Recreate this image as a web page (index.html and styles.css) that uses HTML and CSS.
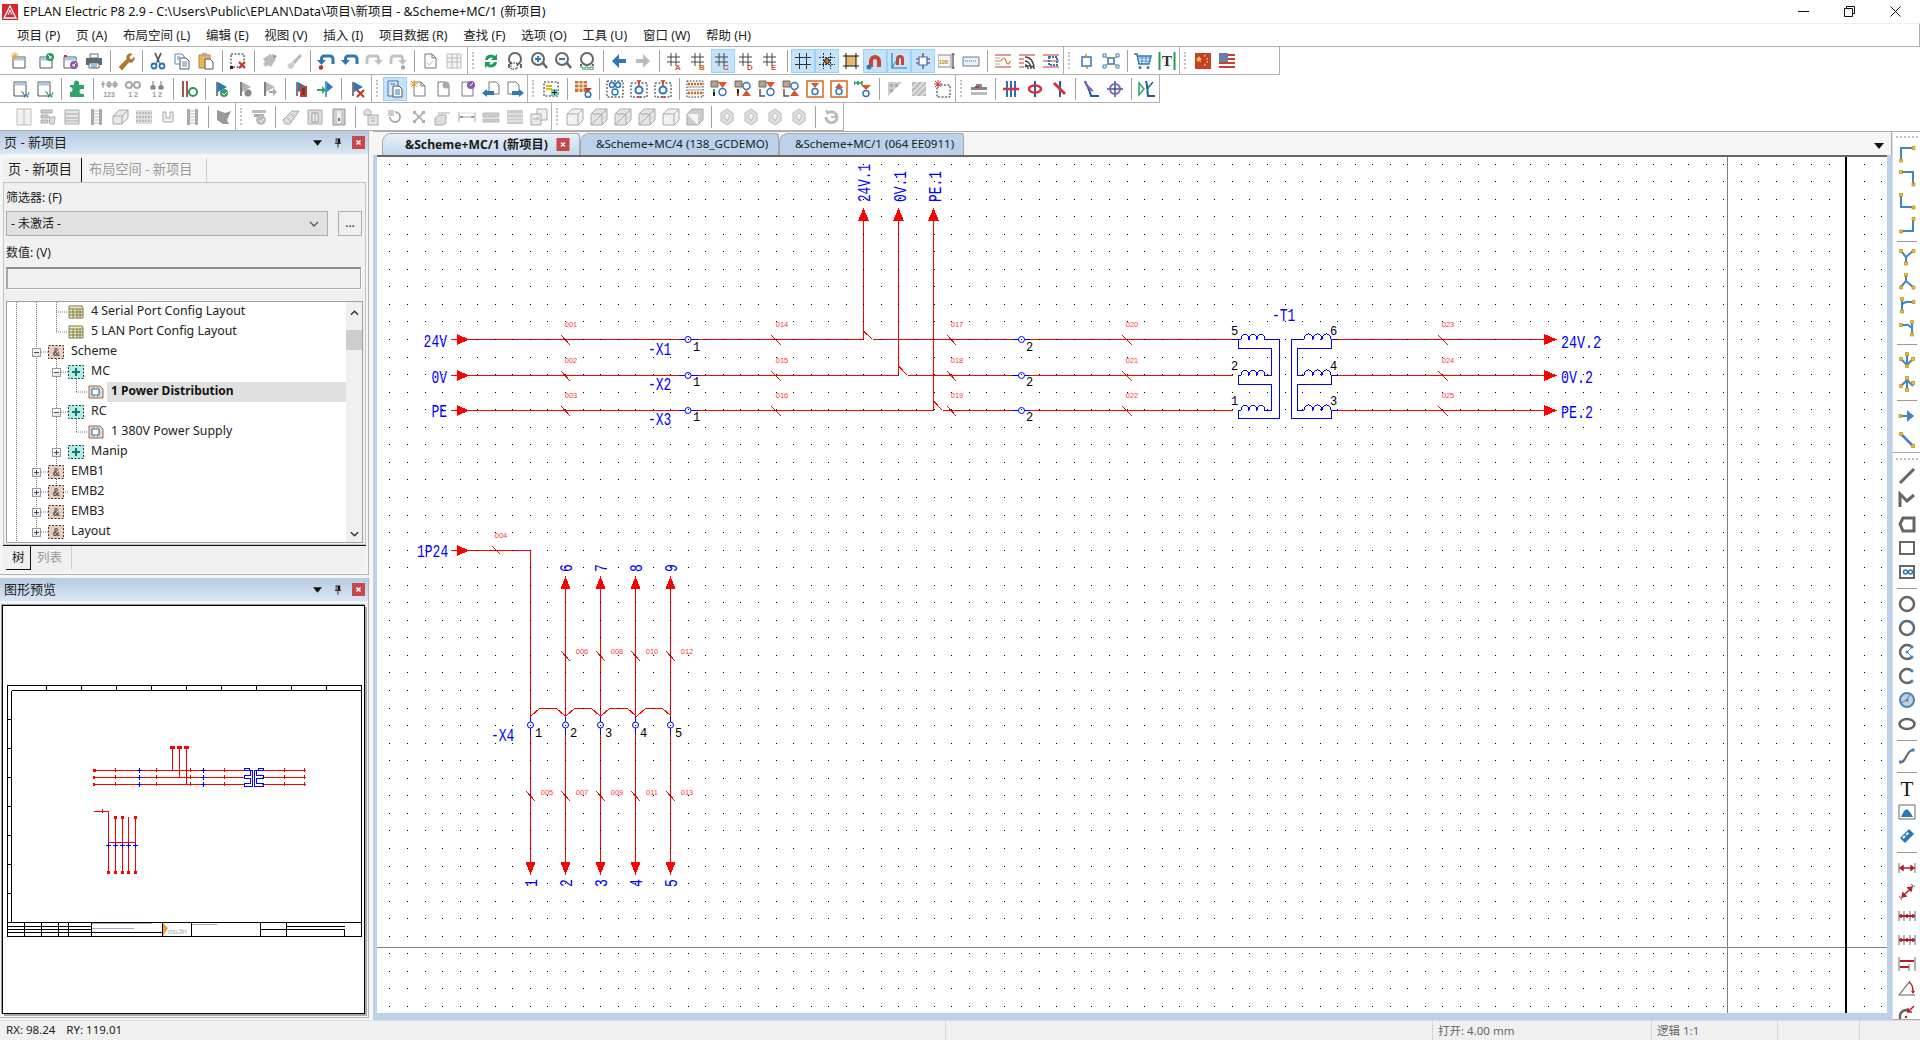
FILE: index.html
```html
<!DOCTYPE html>
<html lang="zh">
<head>
<meta charset="utf-8">
<title>EPLAN Electric P8 2.9</title>
<link rel="stylesheet" href="styles.css">
</head>
<body>
<svg class="sprite" xmlns="http://www.w3.org/2000/svg">
<defs>
<g id="pg"><path d="M3 5h12v11H3z" fill="#fff" stroke="#555"/><path d="M3.5 5.500h11v3h-11z" fill="#a9c6e4"/></g>
<g id="pl"><path d="M4 2h7l4 4v10H4z" fill="#fff" stroke="#777"/><path d="M11 2v4h4" fill="none" stroke="#777"/></g>
<g id="flg"><path d="M5 2v14" stroke="#555" stroke-width="1.500"/></g>
</defs>
<symbol id="dn" viewBox="0 0 18 18"><use href="#pg"/><path d="M5 0v8M1 4h8M2 1l6 6M8 1L2 7" stroke="#f0a030" fill="none"/></symbol>
<symbol id="dg" viewBox="0 0 18 18"><use href="#pg"/><circle cx="13" cy="5" r="4" fill="#2f9e62"/><path d="M11 3l3 3M14 4v2h-2" stroke="#fff" fill="none"/><path d="M2 1h3v3H2z" fill="none"/></symbol>
<symbol id="dp" viewBox="0 0 18 18"><use href="#pg"/><circle cx="13" cy="13" r="4" fill="#8a5bb0"/><path d="M15 11l-3 3M12 12v2h2" stroke="#fff" fill="none"/><path d="M3 3h3v2H3z" fill="#d8303a"/></symbol>
<symbol id="pr" viewBox="0 0 18 18"><path d="M5 2h8v4H5z" fill="#fff" stroke="#666"/><path d="M1 6h16v7H1z" fill="#5a6b78"/><path d="M4 11h10v5H4z" fill="#fff" stroke="#666"/><path d="M6 13h6M6 15h6" stroke="#3a7fc0"/></symbol>
<symbol id="wr" viewBox="0 0 18 18"><path d="M2 15l8-8c-1-3 1-6 5-5l-3 3 1 2 2 1 2-3c1 4-2 6-5 5l-7 8z" fill="#b9782c" stroke="#7f5015" stroke-width=".5"/></symbol>
<symbol id="sc" viewBox="0 0 18 18"><path d="M6 1l4 9M12 1l-4 9" stroke="#555" stroke-width="1.800"/><circle cx="5" cy="14" r="2.500" fill="none" stroke="#2f6fb0" stroke-width="1.800"/><circle cx="13" cy="14" r="2.500" fill="none" stroke="#2f6fb0" stroke-width="1.800"/><path d="M7 12l2-3 2 3" stroke="#2f6fb0" fill="none"/></symbol>
<symbol id="cp" viewBox="0 0 18 18"><path d="M2 2h7l2 2v8H2z" fill="#fff" stroke="#5a86b5"/><path d="M7 6h6l3 3v8H7z" fill="#fff" stroke="#555"/><path d="M9 10h5M9 12h5M9 14h5M4 5h3M4 7h2" stroke="#5a86b5"/></symbol>
<symbol id="pa" viewBox="0 0 18 18"><path d="M2 3h11v13H2z" fill="#e8b45e" stroke="#b5863a"/><path d="M5 1h5v3H5z" fill="#aaa"/><path d="M8 7h5l3 3v7H8z" fill="#fff" stroke="#555"/></symbol>
<symbol id="sx" viewBox="0 0 18 18"><path d="M2 2h13v13H2z" fill="none" stroke="#222" stroke-dasharray="2 1.500"/><path d="M1 14h3v3H1z" fill="#222"/><path d="M10 10l6 6M16 10l-6 6" stroke="#c9352b" stroke-width="2.200"/></symbol>
<symbol id="br" viewBox="0 0 18 18"><path d="M2 7l7-5 6 5-5 8-3-2-2 2-3-3 2-2z" fill="#bbb"/><path d="M11 2l5 2-3 3" fill="#999"/></symbol>
<symbol id="br2" viewBox="0 0 18 18"><path d="M15 2l2 2-7 8-3-2z" fill="#bbb"/><path d="M7 10l3 3-3 4-5-1 2-2-2-1z" fill="#ccc"/></symbol>
<symbol id="un" viewBox="0 0 18 18"><path d="M4.500 9V6.500A2.500 2.500 0 0 1 7 4h6a3 3 0 0 1 3 3v5" fill="none" stroke="#2f78b8" stroke-width="3"/><path d="M0 8h9l-4.500 5z" fill="#2f78b8"/><circle cx="4" cy="15.500" r="2.200" fill="#c02a2a"/></symbol>
<symbol id="un2" viewBox="0 0 18 18"><path d="M4.500 9V6.500A2.500 2.500 0 0 1 7 4h6a3 3 0 0 1 3 3v5" fill="none" stroke="#2f78b8" stroke-width="3"/><path d="M0 8h9l-4.500 5z" fill="#2f78b8"/></symbol>
<symbol id="re" viewBox="0 0 18 18"><path d="M13.500 9V6.500A2.500 2.500 0 0 0 11 4H5a3 3 0 0 0-3 3v5" fill="none" stroke="#c4c4c4" stroke-width="3"/><path d="M18 8H9l4.500 5z" fill="#c4c4c4"/></symbol>
<symbol id="re2" viewBox="0 0 18 18"><path d="M13.500 9V6.500A2.500 2.500 0 0 0 11 4H5a3 3 0 0 0-3 3v5" fill="none" stroke="#c4c4c4" stroke-width="3"/><path d="M18 8H9l4.500 5z" fill="#c4c4c4"/><circle cx="14" cy="15.500" r="2.200" fill="#aaa"/></symbol>
<symbol id="pc" viewBox="0 0 18 18"><use href="#pl"/><path d="M6 11l2 2 4-4" stroke="#bbb" fill="none"/></symbol>
<symbol id="tb" viewBox="0 0 18 18"><path d="M2 2h14v14H2zM2 6h14M2 10h14M7 2v14M12 2v14" fill="#f4f4f4" stroke="#bbb"/></symbol>
<symbol id="rf" viewBox="0 0 18 18"><path d="M3 8a6 6 0 0 1 10-4l2-2v6H9l2-2a3.500 3.500 0 0 0-5 2zM15 10a6 6 0 0 1-10 4l-2 2v-6h6l-2 2a3.500 3.500 0 0 0 5-2z" fill="#1f9a5a"/></symbol>
<symbol id="zw" viewBox="0 0 18 18"><circle cx="9" cy="7" r="6" fill="none" stroke="#666" stroke-width="2"/><path d="M3 12v4M15 12v4" stroke="#666" stroke-width="2"/><path d="M5 11h6v6H5z" fill="#fff" stroke="#222" stroke-dasharray="1.500 1"/></symbol>
<symbol id="zi" viewBox="0 0 18 18"><circle cx="8" cy="7" r="6" fill="#fff" stroke="#666" stroke-width="2"/><path d="M13 11l4 5" stroke="#666" stroke-width="2.500"/><path d="M5 7h6M8 4v6" stroke="#2f78b8" stroke-width="2"/></symbol>
<symbol id="zo" viewBox="0 0 18 18"><circle cx="8" cy="7" r="6" fill="#fff" stroke="#666" stroke-width="2"/><path d="M13 11l4 5" stroke="#666" stroke-width="2.500"/><path d="M5 7h6" stroke="#2f78b8" stroke-width="2"/></symbol>
<symbol id="z1" viewBox="0 0 18 18"><circle cx="9" cy="7" r="6" fill="none" stroke="#666" stroke-width="2"/><path d="M3 12v2M15 12v2" stroke="#666" stroke-width="2"/><path d="M2 15h3v3M7 15h3v3H7zM12 15h3v3h-3z" fill="none" stroke="#1f9a5a"/></symbol>
<symbol id="al" viewBox="0 0 18 18"><path d="M9 2L2 9l7 7v-5h7V7H9z" fill="#2f78b8"/></symbol>
<symbol id="ar" viewBox="0 0 18 18"><path d="M9 2l7 7-7 7v-5H2V7h7z" fill="#2f78b8"/></symbol>
<symbol id="arg" viewBox="0 0 18 18"><path d="M9 2l7 7-7 7v-5H2V7h7z" fill="#bbb"/></symbol>
<symbol id="gA" viewBox="0 0 18 18"><path d="M5 1v13M10 1v13M1 5h13M1 10h13" stroke="#444" fill="none"/><text class="gl c1" x="9" y="18">A</text></symbol>
<symbol id="gB" viewBox="0 0 18 18"><path d="M5 1v13M10 1v13M1 5h13M1 10h13" stroke="#444" fill="none"/><text class="gl c1" x="9" y="18">B</text></symbol>
<symbol id="gC" viewBox="0 0 18 18"><path d="M5 1v13M10 1v13M1 5h13M1 10h13" stroke="#444" fill="none"/><text class="gl c1" x="9" y="18">C</text></symbol>
<symbol id="gD" viewBox="0 0 18 18"><path d="M5 1v13M10 1v13M1 5h13M1 10h13" stroke="#444" fill="none"/><text class="gl c1" x="9" y="18">D</text></symbol>
<symbol id="gE" viewBox="0 0 18 18"><path d="M5 1v13M10 1v13M1 5h13M1 10h13" stroke="#444" fill="none"/><text class="gl c1" x="9" y="18">E</text></symbol>
<symbol id="gr" viewBox="0 0 18 18"><path d="M5.500 1v16M12.500 1v16M1 5.500h16M1 12.500h16" stroke="#333" fill="none"/></symbol>
<symbol id="gs" viewBox="0 0 18 18"><path d="M5.500 1v16M12.500 1v16M1 5.500h16M1 12.500h16" stroke="#333" stroke-dasharray="2 1" fill="none"/><circle cx="9" cy="9" r="2.500" fill="#d9661a" stroke="#222"/></symbol>
<symbol id="ob" viewBox="0 0 18 18"><path d="M4 4h10v10H4z" fill="#e7b96d"/><path d="M4 1v16M14 1v16M1 4h16M1 14h16" stroke="#111" fill="none"/></symbol>
<symbol id="mg" viewBox="0 0 18 18"><path d="M3 15V9a6 6 0 0 1 12 0v6h-4V9a2 2 0 0 0-4 0v6z" fill="#c5482c"/><circle cx="3" cy="15" r="2.500" fill="#2f78b8"/></symbol>
<symbol id="mx" viewBox="0 0 18 18"><path d="M2 1v15h15" fill="none" stroke="#2f78b8" stroke-width="1.200"/><path d="M6 13V7a4 4 0 0 1 8 0v6h-3V7a1 1 0 0 0-2 0v6z" fill="#c5482c"/><path d="M2 16L8 6" stroke="#2f78b8"/></symbol>
<symbol id="cn" viewBox="0 0 18 18"><path d="M5 5h8v8H5z" fill="#fff" stroke="#2f78b8" stroke-width="1.200"/><path d="M2 7h3M13 7h3M2 11h3M13 11h3M9 1v4M9 13v4" stroke="#8b2b2b" stroke-width="1.200"/></symbol>
<symbol id="n8" viewBox="0 0 18 18"><path d="M0 3h13v12H0z" fill="#f5f5f5" stroke="#888"/><text class="tn" x="1" y="12">128</text><path d="M15 2v14M13.500 2h3M13.500 16h3" stroke="#222" fill="none"/></symbol>
<symbol id="rl" viewBox="0 0 18 18"><path d="M1 5h16v9H1z" fill="#e8f0fa" stroke="#6a7a8a"/><path d="M3 9h12" stroke="#2f78b8" stroke-dasharray="1 1"/></symbol>
<symbol id="w1" viewBox="0 0 18 18"><path d="M1 3h16M1 15h16" stroke="#c9352b"/><path d="M1 9h5c2 0 2-3 4-3s2 6 4 6 1-3 3-3" fill="none" stroke="#c9842b" stroke-width="1.200"/><path d="M1 6h5M1 12h5" stroke="#aaa"/></symbol>
<symbol id="w2" viewBox="0 0 18 18"><path d="M1 3h16M1 7h5M1 11h5M1 15h5" stroke="#c9352b"/><path d="M7 15a8 8 0 0 1 8 0M7 5c5 0 9 4 9 12M7 9c3 0 6 3 6 8M7 13c2 0 3 2 3 4" fill="none" stroke="#444" stroke-width="1.400"/></symbol>
<symbol id="w3" viewBox="0 0 18 18"><path d="M1 3h16M1 15h16M1 9h16" stroke="#c9352b"/><path d="M7 5h8v8H7z" fill="none" stroke="#2f78b8" stroke-dasharray="2 1" stroke-width="2"/></symbol>
<symbol id="bx" viewBox="0 0 18 18"><path d="M4 5h9v9H4z" fill="#fff" stroke="#2f78b8" stroke-width="1.500"/><path d="M8 2v3M9 14v3" stroke="#c79013" stroke-width="1.500"/></symbol>
<symbol id="bn" viewBox="0 0 18 18"><path d="M6 6h6v6H6z" fill="none" stroke="#2f78b8" stroke-width="1.500"/><path d="M1 2h3v3H1zM14 2h3v3h-3zM1 13h3v3H1zM14 13h3v3h-3z" fill="#fff" stroke="#2f78b8"/><path d="M4 5l2 1M14 5l-2 1M4 13l2-1M14 13l-2-1" stroke="#c79013" stroke-width="1.200"/></symbol>
<symbol id="ct" viewBox="0 0 18 18"><path d="M0 2h3l2 10h10l2-8H4" fill="#dceaf7" stroke="#2f78b8" stroke-width="1.500"/><path d="M5 6h11M6 9h10M8 4v8M12 4v8" stroke="#2f78b8" stroke-width=".7"/><circle cx="6" cy="15.500" r="1.500" fill="#2f78b8"/><circle cx="14" cy="15.500" r="1.500" fill="#2f78b8"/></symbol>
<symbol id="tt" viewBox="0 0 18 18"><path d="M1.500 0v18" stroke="#1f9a5a" stroke-width="2"/><path d="M16.500 0v18" stroke="#1f9a5a" stroke-width="2"/><text class="tt" x="9" y="14">T</text></symbol>
<symbol id="fc" viewBox="0 0 18 18"><path d="M1 1h16v16H1z" fill="#c9402a"/><path d="M5 4l1 2 2 .5-1.500 1.500.5 2-2-1-2 1 .5-2L2 6.500 4 6z" fill="#f4d04a"/><path d="M10 3h1.500v1.500H10zM12.500 6H14v1.500h-1.500zM12.500 9H14v1.500h-1.500zM10 12h1.500v1.500H10z" fill="#f4d04a"/></symbol>
<symbol id="fu" viewBox="0 0 18 18"><path d="M1 1h16v16H1z" fill="#fff"/><path d="M1 2h16v2H1zM1 6h16v2H1zM1 10h16v2H1zM1 14h16v2H1z" fill="#c9402a"/><path d="M1 1h9v9H1z" fill="#6a7fa8"/></symbol>
<symbol id="c1" viewBox="0 0 18 18"><path d="M2 2h12v14H2z" fill="#fff" stroke="#555"/><path d="M2.500 2.500h11v3h-11z" fill="#a9c6e4"/><path d="M9 12h2l1 3h4l1-3" fill="none" stroke="#2f78b8"/><circle cx="12.500" cy="16.500" r="1" fill="#2f78b8"/><circle cx="15.500" cy="16.500" r="1" fill="#2f78b8"/></symbol>
<symbol id="c2" viewBox="0 0 18 18"><path d="M2 2h12v14H2z" fill="#fff" stroke="#555"/><path d="M2.500 2.500h11v3h-11z" fill="#a9c6e4"/><path d="M9 12h2l1 3h4l1-3" fill="none" stroke="#1f9a5a"/><circle cx="12.500" cy="16.500" r="1" fill="#1f9a5a"/><circle cx="15.500" cy="16.500" r="1" fill="#1f9a5a"/></symbol>
<symbol id="pz" viewBox="0 0 18 18"><path d="M6 3a2.500 2.500 0 0 1 5 0v2h5v4h-2a2.500 2.500 0 0 0 0 5h2v3H2v-5a2.500 2.500 0 0 0 0-5V5h4z" fill="#2fa36a"/></symbol>
<symbol id="t3" viewBox="0 0 18 18"><path d="M3 1v7M9 1v7M15 1v7M1 4h4M7 3h4v3H7zM13 3h4v3h-4z" stroke="#888" fill="none"/><text class="gn" x="9" y="17">123</text></symbol>
<symbol id="t2r" viewBox="0 0 18 18"><circle cx="5" cy="5" r="3" fill="none" stroke="#aaa" stroke-width="2"/><circle cx="13" cy="5" r="3" fill="none" stroke="#aaa" stroke-width="2"/><text class="gn" x="9" y="17">1 2</text></symbol>
<symbol id="t2" viewBox="0 0 18 18"><path d="M5 1v8M13 1v8M3 6h4v3H3zM11 6h4v3h-4z" stroke="#777" fill="#999"/><text class="gn" x="9" y="17">1 2</text></symbol>
<symbol id="bg" viewBox="0 0 18 18"><path d="M2 1h2v16H2zM6 1h2v16H6z" fill="#a9524a"/><circle cx="13" cy="12" r="4" fill="none" stroke="#1f9a5a" stroke-width="2"/></symbol>
<symbol id="f1" viewBox="0 0 18 18"><use href="#flg"/><path d="M6 2l9 5-9 5z" fill="#2f78b8"/><circle cx="12" cy="13" r="4" fill="#2f9e62"/><path d="M10 13l2 2 3-3" stroke="#fff" fill="none"/></symbol>
<symbol id="f2" viewBox="0 0 18 18"><use href="#flg"/><path d="M6 2l9 5-9 5z" fill="#b0b0b0"/><circle cx="12" cy="13" r="3.500" fill="#888" stroke="#bbb" stroke-dasharray="1 1"/></symbol>
<symbol id="f3" viewBox="0 0 18 18"><use href="#flg"/><path d="M6 2l9 5-9 5z" fill="#bbb"/><path d="M9 11h4V8l4 4-4 4v-3H9z" fill="#aaa"/></symbol>
<symbol id="f4" viewBox="0 0 18 18"><use href="#flg"/><path d="M6 2l9 5-9 5z" fill="#2f78b8"/><path d="M8 6h7v11H8z" fill="#b8452f"/><path d="M10 8h3v7h-3z" fill="#8a2f20"/></symbol>
<symbol id="f5" viewBox="0 0 18 18"><path d="M10 1v16" stroke="#2f78b8" stroke-width="1.500"/><path d="M11 2l6 5-6 5z" fill="#2f78b8"/><path d="M1 9h5V6l4 4-4 4v-3H1z" fill="#2fa36a"/></symbol>
<symbol id="f6" viewBox="0 0 18 18"><use href="#flg"/><path d="M6 2l9 5-9 5z" fill="#2f78b8"/><path d="M9 10l7 7M16 10l-7 7" stroke="#c9352b" stroke-width="2.200"/></symbol>
<symbol id="d1" viewBox="0 0 18 18"><path d="M2 1h10v15H2z" fill="#dceaf7" stroke="#2f78b8"/><path d="M7 6h6l3 3v8H7z" fill="#fff" stroke="#555"/><path d="M9 10h5M9 12h5M9 14h5M4 4h5" stroke="#2f78b8"/></symbol>
<symbol id="d2" viewBox="0 0 18 18"><use href="#pl"/><path d="M4 0v8M0 4h8M1 1l6 6M7 1L1 7" stroke="#f0a030"/></symbol>
<symbol id="d3" viewBox="0 0 18 18"><use href="#pl"/><circle cx="12" cy="5" r="3.500" fill="#aaa"/></symbol>
<symbol id="d4" viewBox="0 0 18 18"><use href="#pl"/><circle cx="13" cy="5" r="4" fill="#8a5bb0"/><path d="M15 3l-3 3" stroke="#fff"/></symbol>
<symbol id="d5" viewBox="0 0 18 18"><path d="M7 2h7l3 3v9H7z" fill="#fff" stroke="#777"/><path d="M0 13l5-4v2h7v4H5v2z" fill="#2f78b8"/></symbol>
<symbol id="d6" viewBox="0 0 18 18"><path d="M2 2h8l3 3v9H2z" fill="#fff" stroke="#777"/><path d="M18 13l-5-4v2H6v4h7v2z" fill="#2f78b8"/></symbol>
<symbol id="sy" viewBox="0 0 18 18"><path d="M2 2h14v14H2z" fill="none" stroke="#222" stroke-dasharray="2 1.500"/><path d="M4 5h6v2H4zM4 8h6v2H4z" fill="#e8b400"/><path d="M9 9h7v7H9z" fill="#6fd0c0"/><path d="M12.500 10v5M10 12.500h5" stroke="#222"/></symbol>
<symbol id="og" viewBox="0 0 18 18"><path d="M1 1h12v11H1z" fill="#c9752f"/><path d="M1 4h12M1 8h12M5 1v11M9 1v11" stroke="#fff"/><path d="M10 8h8l-4 4z" fill="#c9352b"/><circle cx="14" cy="14.500" r="2.800" fill="#fff" stroke="#2f78b8" stroke-width="1.500"/></symbol>
<symbol id="nb" viewBox="0 0 18 18"><path d="M1 1h16v16H1z" fill="none" stroke="#222" stroke-dasharray="2 1.500"/><circle cx="6" cy="5" r="2.500" fill="none" stroke="#2f78b8" stroke-width="1.500"/><circle cx="12" cy="5" r="2.500" fill="none" stroke="#2f78b8" stroke-width="1.500"/><circle cx="9" cy="12" r="3" fill="none" stroke="#2f78b8" stroke-width="1.500"/></symbol>
<symbol id="nr" viewBox="0 0 18 18"><path d="M1 3h16v14H1z" fill="none" stroke="#222" stroke-dasharray="2 1.500"/><path d="M7 1h4M9 1v5M7 17h4" stroke="#c9352b" stroke-width="1.500"/><circle cx="9" cy="10" r="3.500" fill="none" stroke="#2f78b8" stroke-width="2"/></symbol>
<symbol id="ts" viewBox="0 0 18 18"><path d="M1 1h16v16H1z" fill="none" stroke="#222" stroke-dasharray="1.500 1.500"/><path d="M2 4h14M2 13h14" stroke="#d9661a" stroke-width="2.500" stroke-dasharray="2 1"/><path d="M2 7h14M2 10h14" stroke="#999"/></symbol>
<symbol id="tr1" viewBox="0 0 18 18"><path d="M1 1h7v6H1z" fill="#b8a48e" stroke="#666"/><path d="M3 9h2v7H3z" fill="#222"/><path d="M3 9h2v3H3z" fill="#2fa36a"/><path d="M8 2h9l-4.500 6z" fill="#d9552e"/><circle cx="12.500" cy="12" r="3.500" fill="#fff" stroke="#2f78b8" stroke-width="1.500"/></symbol>
<symbol id="tr2" viewBox="0 0 18 18"><path d="M1 1h7v6H1z" fill="#b8a48e" stroke="#666"/><path d="M3 9h2v7H3z" fill="#222"/><path d="M3 13h2v3H3z" fill="#c9352b"/><circle cx="12.500" cy="6" r="3.500" fill="#fff" stroke="#2f78b8" stroke-width="1.500"/><path d="M8 16h9l-4.500-6z" fill="#d9552e"/></symbol>
<symbol id="tr3" viewBox="0 0 18 18"><path d="M1 1h7v6H1z" fill="#b8a48e" stroke="#666"/><path d="M2 9v7h5" fill="none" stroke="#555" stroke-width="1.500"/><path d="M8 2h9l-4.500 6z" fill="#d9552e"/><circle cx="12.500" cy="12" r="3.500" fill="#fff" stroke="#2f78b8" stroke-width="1.500"/></symbol>
<symbol id="tr4" viewBox="0 0 18 18"><path d="M1 1h7v6H1z" fill="#b8a48e" stroke="#666"/><path d="M2 9v7h5" fill="none" stroke="#555" stroke-width="1.500"/><circle cx="12.500" cy="6" r="3.500" fill="#fff" stroke="#2f78b8" stroke-width="1.500"/><path d="M8 16h9l-4.500-6z" fill="#d9552e"/></symbol>
<symbol id="ob1" viewBox="0 0 18 18"><path d="M1 1h16v16H1z" fill="#fff" stroke="#d9661a" stroke-width="1.500"/><path d="M5 3h8l-4 5z" fill="#d9552e"/><circle cx="9" cy="11.500" r="3" fill="#fff" stroke="#2f78b8" stroke-width="1.500"/></symbol>
<symbol id="ob2" viewBox="0 0 18 18"><path d="M1 1h16v16H1z" fill="#fff" stroke="#d9661a" stroke-width="1.500"/><path d="M5 8h8L9 3z" fill="#d9552e"/><circle cx="9" cy="11.500" r="3" fill="#fff" stroke="#2f78b8" stroke-width="1.500"/></symbol>
<symbol id="gt" viewBox="0 0 18 18"><path d="M0 3h8M0 1v4M4 1v4M8 1v4" stroke="#1f9a5a" stroke-width="1.500"/><path d="M7 5h10l-5 5z" fill="#d9552e"/><circle cx="12" cy="13.500" r="3" fill="#fff" stroke="#2f78b8" stroke-width="1.500"/></symbol>
<symbol id="hs" viewBox="0 0 18 18"><path d="M2 2h14l-14 14z" fill="#ccc"/><path d="M4 4h3v3H4zM9 4h3v3H9zM4 9h3v3H4z" fill="#aaa"/></symbol>
<symbol id="hh" viewBox="0 0 18 18"><path d="M2 2h14v14H2z" fill="#bbb"/><path d="M2 8l6-6M2 14L14 2M5 16L16 5M11 16l5-5" stroke="#ddd" stroke-width="2"/></symbol>
<symbol id="rs" viewBox="0 0 18 18"><path d="M3 5h13v12H3z" fill="none" stroke="#222" stroke-dasharray="2 1.500"/><path d="M4 0v8M0 4h8M1 1l6 6M7 1L1 7" stroke="#d9303a"/></symbol>
<symbol id="sm" viewBox="0 0 18 18"><path d="M6 4h6v3h5v3H1V7h5z" fill="#888"/><path d="M5 6h4v2H5z" fill="#c9352b"/><path d="M1 12h16v3H1z" fill="#bbb"/></symbol>
<symbol id="l1" viewBox="0 0 18 18"><path d="M5 1v16M9 1v16M13 1v16" stroke="#1f5fa0" stroke-width="1.800"/><path d="M1 9h16" stroke="#d9303a" stroke-width="2.500"/></symbol>
<symbol id="l2" viewBox="0 0 18 18"><path d="M9 1v16" stroke="#1f5fa0" stroke-width="2"/><ellipse cx="9" cy="9" rx="6" ry="3.500" fill="none" stroke="#d9303a" stroke-width="2.500"/></symbol>
<symbol id="l3" viewBox="0 0 18 18"><path d="M10 1v16" stroke="#1f5fa0" stroke-width="2"/><path d="M4 3l11 11" stroke="#d9303a" stroke-width="3"/></symbol>
<symbol id="l4" viewBox="0 0 18 18"><path d="M3 1c2 6 5 9 6 15h8" fill="none" stroke="#1f5fa0" stroke-width="2"/><path d="M3 1c1 5 4 7 8 10" fill="none" stroke="#8a5bb0" stroke-width="2"/></symbol>
<symbol id="l5" viewBox="0 0 18 18"><path d="M9 1v16M1 9h16" stroke="#1f5fa0" stroke-width="1.500"/><circle cx="9" cy="9" r="5" fill="none" stroke="#8a5bb0" stroke-width="2"/></symbol>
<symbol id="l6" viewBox="0 0 18 18"><path d="M1 3l5 6-5 6z" fill="none" stroke="#2fa36a" stroke-width="1.500"/><path d="M8 1c2 6 1 9 2 15h7" fill="none" stroke="#1f5fa0" stroke-width="2"/><path d="M9 9l6-7" stroke="#1f5fa0" stroke-width="1.500"/></symbol>
<symbol id="g1" viewBox="0 0 18 18"><path d="M2 1h14v16H2zM9 1v16M7 9h0M11 9h0" fill="#f0f0f0" stroke="#bbb"/></symbol>
<symbol id="g2" viewBox="0 0 18 18"><path d="M2 2h11v3H2zM2 7h7v3H2zM2 12h7v3H2z" fill="#ccc" stroke="#aaa"/><path d="M10 9h6l-1 7h-4z" fill="#ddd" stroke="#aaa"/></symbol>
<symbol id="g3" viewBox="0 0 18 18"><path d="M2 2h14v14H2zM2 6h14M2 10h14M2 13h14" fill="#e4e4e4" stroke="#aaa"/></symbol>
<symbol id="g4" viewBox="0 0 18 18"><path d="M4 1h3v16H4zM12 1h3v16h-3z" fill="#aaa"/><path d="M7 3h5M7 6h5M7 9h5M7 12h5M7 15h5" stroke="#bbb"/></symbol>
<symbol id="g5" viewBox="0 0 18 18"><path d="M2 8l6-6h9v8l-6 6H2z" fill="#e8e8e8" stroke="#aaa"/><path d="M2 8h9v8M11 8l6-6" fill="none" stroke="#aaa"/></symbol>
<symbol id="g6" viewBox="0 0 18 18"><path d="M1 2h16v14H1z" fill="#ddd"/><path d="M1 5h16M1 9h16M1 13h16" stroke="#999" stroke-dasharray="2 1"/></symbol>
<symbol id="g7" viewBox="0 0 18 18"><path d="M4 4v10h10V4h-3v6H7V4z" fill="#f0f0f0" stroke="#aaa"/></symbol>
<symbol id="g8" viewBox="0 0 18 18"><path d="M2 2l8 3 6-2-4 9 2 4H8L2 12z" fill="#999"/></symbol>
<symbol id="g9" viewBox="0 0 18 18"><path d="M2 2h14v3H2z" fill="#bbb"/><path d="M4 6h10v3H4z" fill="#aaa"/><circle cx="11" cy="12" r="5" fill="#bbb"/><path d="M9 12l2 2 3-3" stroke="#fff" fill="none"/></symbol>
<symbol id="g10" viewBox="0 0 18 18"><path d="M1 12L10 3h7L8 16H3z" fill="#ddd" stroke="#aaa"/><path d="M5 10l4 4M9 6l4 4" stroke="#aaa"/></symbol>
<symbol id="g11" viewBox="0 0 18 18"><path d="M2 2h14v14H2z" fill="#ddd" stroke="#aaa"/><path d="M6 5h6v9H6zM9 5v9" fill="#f4f4f4" stroke="#999"/></symbol>
<symbol id="g12" viewBox="0 0 18 18"><path d="M3 1h12v16H3z" fill="#ccc" stroke="#999"/><path d="M7 3h4v12H7z" fill="#eee"/><path d="M8 10h2v3H8z" fill="#777"/></symbol>
<symbol id="g13" viewBox="0 0 18 18"><path d="M2 3l4-2 3 2v4H2zM6 7h10v10H6z" fill="#e4e4e4" stroke="#aaa"/><path d="M9 10h4M9 13h4" stroke="#aaa"/></symbol>
<symbol id="g14" viewBox="0 0 18 18"><path d="M4 9a5 5 0 1 0 5-5" fill="none" stroke="#aaa" stroke-width="2"/><path d="M2 2h6v6H2z" fill="#ccc"/></symbol>
<symbol id="g15" viewBox="0 0 18 18"><path d="M3 3h3v3H3zM12 3h3v3h-3zM3 12h3v3H3zM12 12h3v3h-3zM7 7h4v4H7z" fill="#aaa"/><path d="M5 5l8 8M13 5l-8 8" stroke="#bbb" stroke-width="2"/></symbol>
<symbol id="g16" viewBox="0 0 18 18"><path d="M1 10l4-3h7v8l-3 2H1z" fill="#ddd" stroke="#aaa"/><path d="M4 5h12" stroke="#aaa"/></symbol>
<symbol id="g17" viewBox="0 0 18 18"><path d="M1 4v10M17 4v10M1 9h16" stroke="#aaa"/><path d="M5 9l-3 0M13 9h3" stroke="#999" stroke-width="2"/><path d="M3 5h12" stroke="#ddd"/></symbol>
<symbol id="g18" viewBox="0 0 18 18"><path d="M1 5h16v4H1zM1 11h16v3H1z" fill="#ccc" stroke="#bbb"/></symbol>
<symbol id="g19" viewBox="0 0 18 18"><path d="M1 2h16v14H1z" fill="#ccc"/><path d="M1 6h16M1 10h16M1 13h16" stroke="#eee"/></symbol>
<symbol id="g20" viewBox="0 0 18 18"><path d="M7 1h10v11H7z" fill="#f0f0f0" stroke="#aaa"/><path d="M1 6h10v11H1z" fill="#e8e8e8" stroke="#aaa"/><path d="M3 11h6M9 11l-2-2" stroke="#aaa" fill="none"/></symbol>
<symbol id="g21" viewBox="0 0 18 18"><path d="M1 6l5-5h11v11l-5 5H1zM1 6h11v11M12 6l5-5" fill="#f2f2f2" stroke="#aaa"/></symbol>
<symbol id="g22" viewBox="0 0 18 18"><path d="M1 6l5-5h11v11l-5 5H1zM1 17l11-11M1 6h11v11M12 6l5-5" fill="#e4e4e4" stroke="#aaa"/></symbol>
<symbol id="g23" viewBox="0 0 18 18"><path d="M1 6l5-5h11v11l-5 5H1z" fill="#ccc" stroke="#aaa"/><path d="M1 6h11v11z" fill="#f4f4f4"/></symbol>
<symbol id="g24" viewBox="0 0 18 18"><path d="M9 1l6 4v8l-6 4-6-4V5z" fill="#ddd" stroke="#bbb"/><path d="M9 5l3 3-3 5-3-5z" fill="#f4f4f4" stroke="#bbb"/></symbol>
<symbol id="g25" viewBox="0 0 18 18"><path d="M4 9a5.500 5.500 0 1 0 2-4" fill="none" stroke="#bbb" stroke-width="3"/><path d="M3 2l5 1-3 4z" fill="#bbb"/><path d="M9 8h5v2H9z" fill="#bbb"/></symbol>
<symbol id="k1" viewBox="0 0 18 18"><path d="M3 15V3h12" fill="none" stroke="#3f86c8" stroke-width="2"/><path class="nd" d="M1.500 14h3v3h-3zM14 1.500h3v3h-3z"/></symbol>
<symbol id="k2" viewBox="0 0 18 18"><path d="M3 3h12v12" fill="none" stroke="#3f86c8" stroke-width="2"/><path class="nd" d="M1.500 1.500h3v3h-3zM14 14h3v3h-3z"/></symbol>
<symbol id="k3" viewBox="0 0 18 18"><path d="M3 3v12h12" fill="none" stroke="#3f86c8" stroke-width="2"/><path class="nd" d="M1.500 1.500h3v3h-3zM14 14h3v3h-3z"/></symbol>
<symbol id="k4" viewBox="0 0 18 18"><path d="M3 15h12V3" fill="none" stroke="#3f86c8" stroke-width="2"/><path class="nd" d="M1.500 14h3v3h-3zM14 1.500h3v3h-3z"/></symbol>
<symbol id="y1" viewBox="0 0 18 18"><path d="M3 3l5 6v7M15 3L8 9" fill="none" stroke="#3f86c8" stroke-width="2"/><path class="nd" d="M1.500 1.500h3v3h-3zM14 1.500h3v3h-3zM6.500 14h3v3h-3z"/></symbol>
<symbol id="y2" viewBox="0 0 18 18"><path d="M3 15l5-6V3M15 15L8 9" fill="none" stroke="#3f86c8" stroke-width="2"/><path class="nd" d="M1.500 14h3v3h-3zM14 14h3v3h-3zM6.500 1.500h3v3h-3z"/></symbol>
<symbol id="y3" viewBox="0 0 18 18"><path d="M4 3v12M4 8l4-2h7" fill="none" stroke="#3f86c8" stroke-width="2"/><path class="nd" d="M2.500 1.500h3v3h-3zM2.500 14h3v3h-3zM14 4.500h3v3h-3z"/></symbol>
<symbol id="y4" viewBox="0 0 18 18"><path d="M14 3v12M14 9l-4-3H3" fill="none" stroke="#3f86c8" stroke-width="2"/><path class="nd" d="M12.500 1.500h3v3h-3zM12.500 14h3v3h-3zM1.500 4.500h3v3h-3z"/></symbol>
<symbol id="v1" viewBox="0 0 18 18"><path d="M3 8l6 6 6-6M9 3v11" fill="none" stroke="#3f86c8" stroke-width="2"/><path class="nd" d="M1.500 6.500h3v3h-3zM13.500 6.500h3v3h-3zM7.500 1.500h3v3h-3zM7.500 13.500h3v3h-3z"/></symbol>
<symbol id="v2" viewBox="0 0 18 18"><path d="M3 11l6-6 6 6M9 5v9" fill="none" stroke="#3f86c8" stroke-width="2"/><path class="nd" d="M1.500 9.500h3v3h-3zM13.500 6.500h3v3h-3zM7.500 1.500h3v3h-3zM7.500 13.500h3v3h-3z"/></symbol>
<symbol id="a1" viewBox="0 0 18 18"><path d="M2 9h12" stroke="#3f86c8" stroke-width="2"/><path d="M9 3l7 6-7 6z" fill="#3f86c8"/><path class="nd" d="M1 7.500h3v3H1z"/></symbol>
<symbol id="a2" viewBox="0 0 18 18"><path d="M3 3l12 12" stroke="#3f86c8" stroke-width="2.500"/><path class="nd" d="M1.500 1.500h3v3h-3zM13.500 13.500h3v3h-3z"/></symbol>
<symbol id="ln" viewBox="0 0 18 18"><path d="M2 16L16 2" stroke="#666" stroke-width="3"/></symbol>
<symbol id="pll" viewBox="0 0 18 18"><path d="M2 16V3l7 7 7-6" fill="none" stroke="#666" stroke-width="3"/></symbol>
<symbol id="plg" viewBox="0 0 18 18"><path d="M5 3h11v13H5L2 9z" fill="none" stroke="#666" stroke-width="3"/></symbol>
<symbol id="re3" viewBox="0 0 18 18"><path d="M2 3h14v12H2z" fill="none" stroke="#666" stroke-width="2"/></symbol>
<symbol id="rc2" viewBox="0 0 18 18"><path d="M2 3h14v12H2z" fill="none" stroke="#666" stroke-width="2"/><circle cx="7.500" cy="9" r="2" fill="none" stroke="#2f78b8" stroke-width="1.500"/><circle cx="12.500" cy="9" r="2" fill="none" stroke="#2f78b8" stroke-width="1.500"/></symbol>
<symbol id="ci" viewBox="0 0 18 18"><circle cx="9" cy="9" r="7" fill="none" stroke="#666" stroke-width="2.500"/></symbol>
<symbol id="ci2" viewBox="0 0 18 18"><circle cx="9" cy="9" r="7" fill="none" stroke="#666" stroke-width="2.500"/><circle cx="4" cy="4" r="1.500" fill="#3f86c8"/><circle cx="14" cy="4" r="1.500" fill="#3f86c8"/><circle cx="14" cy="14" r="1.500" fill="#3f86c8"/></symbol>
<symbol id="ci3" viewBox="0 0 18 18"><path d="M14 4a7 7 0 1 0 0 10" fill="none" stroke="#666" stroke-width="2.500"/><path d="M14 4l-5 5 5 5" fill="none" stroke="#3f86c8"/><circle cx="9" cy="9" r="1.500" fill="#3f86c8"/><circle cx="14" cy="4" r="1.500" fill="#3f86c8"/><circle cx="14" cy="14" r="1.500" fill="#3f86c8"/></symbol>
<symbol id="ci4" viewBox="0 0 18 18"><path d="M14 4a7 7 0 1 0 0 10" fill="none" stroke="#666" stroke-width="2.500"/><circle cx="14" cy="4" r="1.500" fill="#3f86c8"/><circle cx="14" cy="14" r="1.500" fill="#3f86c8"/></symbol>
<symbol id="ci5" viewBox="0 0 18 18"><circle cx="9" cy="9" r="7" fill="#ccc" stroke="#3f86c8" stroke-width="2"/><path d="M9 9L3 12M9 9l3-6" stroke="#3f86c8"/><circle cx="9" cy="9" r="1.500" fill="#3f86c8"/></symbol>
<symbol id="el" viewBox="0 0 18 18"><ellipse cx="9" cy="9" rx="7.500" ry="5" fill="none" stroke="#666" stroke-width="2.500"/></symbol>
<symbol id="sp" viewBox="0 0 18 18"><path d="M2 15c6 2 6-12 13-12" fill="none" stroke="#666" stroke-width="2"/><circle cx="2.500" cy="15" r="1.800" fill="#3f86c8"/><circle cx="15" cy="3" r="1.800" fill="#3f86c8"/></symbol>
<symbol id="txt" viewBox="0 0 18 18"><text class="bigt" x="9" y="17">T</text></symbol>
<symbol id="im" viewBox="0 0 18 18"><path d="M1 2h16v14H1z" fill="#fff" stroke="#666"/><path d="M3 14l3-6 3-2 3 3 3 5z" fill="#2f78b8"/></symbol>
<symbol id="lk" viewBox="0 0 18 18"><path d="M2 11l9-9 5 5-9 9z" fill="#2f78b8"/><path d="M5 11l6-6" stroke="#fff" stroke-width="2" stroke-dasharray="3 1.500"/></symbol>
<symbol id="m1" viewBox="0 0 18 18"><path d="M1 4v10M17 4v10" stroke="#666"/><path d="M2 9h14M2 9l3-2v4zM16 9l-3-2v4z" stroke="#b51c25" stroke-width="1.500" fill="#b51c25"/></symbol>
<symbol id="m2" viewBox="0 0 18 18"><path d="M1 13l3 4M13 1l4 3" stroke="#666"/><path d="M4 14L14 4M4 14l1-4 3 3zM14 4l-4 1 3 3z" stroke="#b51c25" stroke-width="1.500" fill="#b51c25"/></symbol>
<symbol id="m3" viewBox="0 0 18 18"><path d="M1 4v10M6 4v10M12 4v10M17 4v10" stroke="#666"/><path d="M1 9h16" stroke="#b51c25" stroke-width="2"/><path d="M3 7v4M9 7v4M15 7v4" stroke="#b51c25" stroke-width="1.500"/></symbol>
<symbol id="m4" viewBox="0 0 18 18"><path d="M1 2v14M17 2v14" stroke="#666"/><path d="M2 6h14M2 12h9" stroke="#b51c25" stroke-width="2"/><path d="M11 9v7" stroke="#666"/></symbol>
<symbol id="m5" viewBox="0 0 18 18"><path d="M1 16L12 2M1 16h16" stroke="#666" stroke-width="1.200" fill="none"/><path d="M11 3c3 2 4 5 4 9" fill="none" stroke="#b51c25" stroke-width="1.500"/><path d="M13 12h4l-2 3z" fill="#b51c25"/></symbol>
<symbol id="m6" viewBox="0 0 18 18"><path d="M2 17v-4a6 6 0 0 1 9-5" fill="none" stroke="#666" stroke-width="2.500"/><circle cx="8" cy="14" r="1.200" fill="#b51c25"/><path d="M16 3l-6 6M10 5v4h4" fill="none" stroke="#b51c25" stroke-width="1.500"/></symbol>
<symbol id="tbl" viewBox="0 0 16 14"><path d="M1 1h13l1 2v10H1z" fill="#f2ecb0" stroke="#7a7a5a"/><path d="M1 4h14M1 7h14M1 10h14M5 4v9M9 4v9M12 4v9" stroke="#7a7a5a" fill="none"/></symbol>
<symbol id="amp" viewBox="0 0 16 14"><path d="M0.500 .5h15v13H.5z" fill="#e8ccbc" stroke="#333" stroke-dasharray="2 1.500"/><text class="ampt" x="8" y="11">&amp;</text></symbol>
<symbol id="plus" viewBox="0 0 16 14"><path d="M0.500 .5h15v13H.5z" fill="#a9f0ec" stroke="#333" stroke-dasharray="2 1.500"/><path d="M8 3v8M4 7h8" stroke="#2a6f6a" stroke-width="2"/></symbol>
<symbol id="sch" viewBox="0 0 16 14"><path d="M1 1h11l3 3v9H1z" fill="#f0d8c8" stroke="#8a6a5a"/><path d="M4 4h7v6H4z" fill="#fff" stroke="#2f78b8" stroke-width="1.200"/><path d="M5 2.500h1M9 2.500h1M5 11.500h1M9 11.500h1" stroke="#c79013"/></symbol>
<symbol id="chev" viewBox="0 0 10 6"><path d="M1 1l4 4 4-4" fill="none" stroke="#555" stroke-width="1.300"/></symbol>
<symbol id="chevu" viewBox="0 0 10 6"><path d="M1 5l4-4 4 4" fill="none" stroke="#333" stroke-width="1.600"/></symbol>
<symbol id="chevd" viewBox="0 0 10 6"><path d="M1 1l4 4 4-4" fill="none" stroke="#333" stroke-width="1.600"/></symbol>
<symbol id="tri" viewBox="0 0 10 6"><path d="M0 0h10L5 6z" fill="#111"/></symbol>
<symbol id="pin" viewBox="0 0 10 11"><path d="M3 1h5v5h1v1H2V6h1zM5 7h1v4H5z" fill="#111"/><path d="M4 2h1v4H4z" fill="#fff"/></symbol>
<symbol id="cx" viewBox="0 0 13 13"><path d="M0 0h13v13H0z" fill="#c8474a"/><path d="M4.500 4.500l4 4M8.500 4.500l-4 4" stroke="#fff" stroke-width="1.500"/></symbol>
</svg>

<header class="titlebar">
  <svg class="appicon" viewBox="0 0 16 16"><path d="M0 0h16v16H0z" fill="#d8262c"/><path d="M8 2l6 12H2z" fill="none" stroke="#fff" stroke-width="1.300"/><path d="M6 11l2-5 2 5" fill="none" stroke="#fff"/></svg>
  <span class="apptitle">EPLAN Electric P8 2.9 - C:\Users\Public\EPLAN\Data\项目\新项目 - &amp;Scheme+MC/1 (新项目)</span>
  <div class="winbtns">
    <span class="wb"><svg viewBox="0 0 11 11"><path d="M0 5.500h11" stroke="#111"/></svg></span>
    <span class="wb"><svg viewBox="0 0 11 11"><path d="M2.500 2.500V.5h8v7h-2M.5 2.500h8v8h-8z" fill="none" stroke="#111"/></svg></span>
    <span class="wb"><svg viewBox="0 0 11 11"><path d="M.5.5l10 10M10.500.5l-10 10" stroke="#111"/></svg></span>
  </div>
</header>

<nav class="menubar">
  <span>项目 (P)</span><span>页 (A)</span><span>布局空间 (L)</span><span>编辑 (E)</span><span>视图 (V)</span><span>插入 (I)</span><span>项目数据 (R)</span><span>查找 (F)</span><span>选项 (O)</span><span>工具 (U)</span><span>窗口 (W)</span><span>帮助 (H)</span>
</nav>

<section class="toolbars">
  <div class="row">
    <div class="grp r1a">
      <i class="b wide"><svg><use href="#dn"/></svg></i><i class="b"><svg><use href="#dg"/></svg></i><i class="b"><svg><use href="#dp"/></svg></i><i class="b"><svg><use href="#pr"/></svg></i><b class="s"></b>
      <i class="b"><svg><use href="#wr"/></svg></i><b class="s"></b>
      <i class="b"><svg><use href="#sc"/></svg></i><i class="b"><svg><use href="#cp"/></svg></i><i class="b"><svg><use href="#pa"/></svg></i><b class="s"></b>
      <i class="b"><svg><use href="#sx"/></svg></i><b class="s"></b>
      <i class="b"><svg><use href="#br"/></svg></i><i class="b"><svg><use href="#br2"/></svg></i><b class="s"></b>
      <i class="b"><svg><use href="#un"/></svg></i><i class="b"><svg><use href="#un2"/></svg></i><i class="b"><svg><use href="#re"/></svg></i><i class="b"><svg><use href="#re2"/></svg></i><b class="s"></b>
      <i class="b"><svg><use href="#pc"/></svg></i><i class="b"><svg><use href="#tb"/></svg></i>
    </div>
    <div class="grp gripped">
      <i class="b"><svg><use href="#rf"/></svg></i><i class="b"><svg><use href="#zw"/></svg></i><i class="b"><svg><use href="#zi"/></svg></i><i class="b"><svg><use href="#zo"/></svg></i><i class="b"><svg><use href="#z1"/></svg></i><b class="s"></b>
      <i class="b"><svg><use href="#al"/></svg></i><i class="b"><svg><use href="#arg"/></svg></i><b class="s"></b>
      <i class="b"><svg><use href="#gA"/></svg></i><i class="b"><svg><use href="#gB"/></svg></i><i class="b on"><svg><use href="#gC"/></svg></i><i class="b"><svg><use href="#gD"/></svg></i><i class="b"><svg><use href="#gE"/></svg></i><b class="s"></b>
      <i class="b on"><svg><use href="#gr"/></svg></i><i class="b on"><svg><use href="#gs"/></svg></i><i class="b"><svg><use href="#ob"/></svg></i><i class="b on"><svg><use href="#mg"/></svg></i><i class="b on"><svg><use href="#mx"/></svg></i><i class="b on"><svg><use href="#cn"/></svg></i><i class="b"><svg><use href="#n8"/></svg></i><i class="b"><svg><use href="#rl"/></svg></i><b class="s"></b>
      <i class="b"><svg><use href="#w1"/></svg></i><i class="b"><svg><use href="#w2"/></svg></i><i class="b"><svg><use href="#w3"/></svg></i>
    </div>
    <div class="grp gripped">
      <i class="b"><svg><use href="#bx"/></svg></i><i class="b"><svg><use href="#bn"/></svg></i><b class="s"></b><i class="b"><svg><use href="#ct"/></svg></i><i class="b"><svg><use href="#tt"/></svg></i>
    </div>
    <div class="grp gripped end">
      <i class="b"><svg><use href="#fc"/></svg></i><i class="b"><svg><use href="#fu"/></svg></i>
    </div>
  </div>
  <div class="row">
    <div class="grp r2a">
      <i class="b"><svg><use href="#c1"/></svg></i><i class="b"><svg><use href="#c2"/></svg></i><b class="s"></b>
      <i class="b"><svg><use href="#pz"/></svg></i><b class="s"></b>
      <i class="b"><svg><use href="#t3"/></svg></i><i class="b"><svg><use href="#t2r"/></svg></i><i class="b"><svg><use href="#t2"/></svg></i><b class="s"></b>
      <i class="b"><svg><use href="#bg"/></svg></i><b class="s"></b>
      <i class="b"><svg><use href="#f1"/></svg></i><i class="b"><svg><use href="#f2"/></svg></i><i class="b"><svg><use href="#f3"/></svg></i><b class="s"></b>
      <i class="b"><svg><use href="#f4"/></svg></i><i class="b"><svg><use href="#f5"/></svg></i><b class="s"></b>
      <i class="b"><svg><use href="#f6"/></svg></i>
    </div>
    <div class="grp gripped">
      <i class="b on"><svg><use href="#d1"/></svg></i><i class="b"><svg><use href="#d2"/></svg></i><i class="b"><svg><use href="#d3"/></svg></i><i class="b"><svg><use href="#d4"/></svg></i><i class="b"><svg><use href="#d5"/></svg></i><i class="b"><svg><use href="#d6"/></svg></i>
    </div>
    <div class="grp gripped">
      <i class="b"><svg><use href="#sy"/></svg></i><b class="s"></b><i class="b"><svg><use href="#og"/></svg></i><b class="s"></b>
      <i class="b"><svg><use href="#nb"/></svg></i><i class="b"><svg><use href="#nr"/></svg></i><i class="b"><svg><use href="#nr"/></svg></i><b class="s"></b>
      <i class="b"><svg><use href="#ts"/></svg></i><i class="b"><svg><use href="#tr1"/></svg></i><i class="b"><svg><use href="#tr2"/></svg></i><i class="b"><svg><use href="#tr3"/></svg></i><i class="b"><svg><use href="#tr4"/></svg></i><i class="b"><svg><use href="#ob1"/></svg></i><i class="b"><svg><use href="#ob2"/></svg></i><i class="b"><svg><use href="#gt"/></svg></i><b class="s"></b>
      <i class="b"><svg><use href="#hs"/></svg></i><i class="b"><svg><use href="#hh"/></svg></i><i class="b"><svg><use href="#rs"/></svg></i>
    </div>
    <div class="grp gripped">
      <i class="b"><svg><use href="#sm"/></svg></i><b class="s"></b>
      <i class="b"><svg><use href="#l1"/></svg></i><i class="b"><svg><use href="#l2"/></svg></i><i class="b"><svg><use href="#l3"/></svg></i><b class="s"></b>
      <i class="b"><svg><use href="#l4"/></svg></i><i class="b"><svg><use href="#l5"/></svg></i><b class="s"></b>
      <i class="b"><svg><use href="#l6"/></svg></i>
    </div>
  </div>
  <div class="row">
    <div class="grp r3a">
      <i class="b"><svg><use href="#g1"/></svg></i><i class="b"><svg><use href="#g2"/></svg></i><i class="b"><svg><use href="#g3"/></svg></i><i class="b"><svg><use href="#g4"/></svg></i><i class="b"><svg><use href="#g5"/></svg></i><i class="b"><svg><use href="#g6"/></svg></i><i class="b"><svg><use href="#g7"/></svg></i><i class="b"><svg><use href="#g4"/></svg></i><b class="s"></b>
      <i class="b"><svg><use href="#g8"/></svg></i>
    </div>
    <div class="grp gripped">
      <i class="b"><svg><use href="#g9"/></svg></i><b class="s"></b>
      <i class="b"><svg><use href="#g10"/></svg></i><i class="b"><svg><use href="#g11"/></svg></i><i class="b"><svg><use href="#g12"/></svg></i><b class="s"></b>
      <i class="b"><svg><use href="#g13"/></svg></i><i class="b"><svg><use href="#g14"/></svg></i><i class="b"><svg><use href="#g15"/></svg></i><i class="b"><svg><use href="#g16"/></svg></i><i class="b"><svg><use href="#g17"/></svg></i><i class="b"><svg><use href="#g18"/></svg></i><i class="b"><svg><use href="#g19"/></svg></i><i class="b"><svg><use href="#g20"/></svg></i>
    </div>
    <div class="grp gripped">
      <i class="b"><svg><use href="#g21"/></svg></i><i class="b"><svg><use href="#g22"/></svg></i><i class="b"><svg><use href="#g22"/></svg></i><i class="b"><svg><use href="#g22"/></svg></i><i class="b"><svg><use href="#g21"/></svg></i><i class="b"><svg><use href="#g23"/></svg></i><b class="s"></b>
      <i class="b"><svg><use href="#g24"/></svg></i><i class="b"><svg><use href="#g24"/></svg></i><i class="b"><svg><use href="#g24"/></svg></i><i class="b"><svg><use href="#g24"/></svg></i><b class="s"></b>
      <i class="b"><svg><use href="#g25"/></svg></i>
    </div>
  </div>
</section>

<main class="main">
  <aside class="left">
    <section class="panel top">
      <div class="ptitle"><span class="lift">页 - 新项目</span><span class="pctl"><svg class="c-tri"><use href="#tri"/></svg><svg class="c-pin"><use href="#pin"/></svg><svg class="c-x"><use href="#cx"/></svg></span></div>
      <div class="ptabs"><span class="ptab act">页 - 新项目</span><span class="ptab">布局空间 - 新项目</span></div>
      <div class="pbody">
        <label class="flabel">筛选器: (F)</label>
        <div class="filter"><div class="combo"><span class="lift">- 未激活 -</span><svg class="cv"><use href="#chev"/></svg></div><div class="dots">...</div></div>
        <label class="flabel second">数值: (V)</label>
        <div class="field"></div>
        <div class="tree">
          <div class="tlist">
            <svg class="tlines" viewBox="7 303 339 240"><path d="M16.500 303V543M36.500 303V533M56.500 303V333M56 313H68M56 333H68M41 353H48M56.500 358V493M61 373H68M61 413H68M61 493H68M76.500 378V393M76 393H88M76.500 418V433M76 433H88M41 473H48M41 493H48M41 513H48M41 533H48" fill="none" stroke="#777" stroke-dasharray="1 1"/></svg>
            <div class="tr l2"><i class="nox"></i><svg class="ti"><use href="#tbl"/></svg><span class="tt">4 Serial Port Config Layout</span></div>
            <div class="tr l2"><i class="nox"></i><svg class="ti"><use href="#tbl"/></svg><span class="tt">5 LAN Port Config Layout</span></div>
            <div class="tr l1"><i class="ex min"></i><svg class="ti"><use href="#amp"/></svg><span class="tt">Scheme</span></div>
            <div class="tr l2"><i class="ex min"></i><svg class="ti"><use href="#plus"/></svg><span class="tt">MC</span></div>
            <div class="tr l3"><i class="nox"></i><svg class="ti"><use href="#sch"/></svg><span class="tt sel">1 Power Distribution</span></div>
            <div class="tr l2"><i class="ex min"></i><svg class="ti"><use href="#plus"/></svg><span class="tt">RC</span></div>
            <div class="tr l3"><i class="nox"></i><svg class="ti"><use href="#sch"/></svg><span class="tt">1 380V Power Supply</span></div>
            <div class="tr l2"><i class="ex pl"></i><svg class="ti"><use href="#plus"/></svg><span class="tt">Manip</span></div>
            <div class="tr l1"><i class="ex pl"></i><svg class="ti"><use href="#amp"/></svg><span class="tt">EMB1</span></div>
            <div class="tr l1"><i class="ex pl"></i><svg class="ti"><use href="#amp"/></svg><span class="tt">EMB2</span></div>
            <div class="tr l1"><i class="ex pl"></i><svg class="ti"><use href="#amp"/></svg><span class="tt">EMB3</span></div>
            <div class="tr l1"><i class="ex pl"></i><svg class="ti"><use href="#amp"/></svg><span class="tt">Layout</span></div>
          </div>
          <div class="vbar"><svg class="va"><use href="#chevu"/></svg><div class="thumbwrap"><div class="thumb"></div></div><svg class="va"><use href="#chevd"/></svg></div>
        </div>
      </div>
      <div class="btabs"><span class="btab act">树</span><span class="btab">列表</span></div>
    </section>
    <section class="panel bottom">
      <div class="ptitle"><span class="lift">图形预览</span><span class="pctl"><svg class="c-tri"><use href="#tri"/></svg><svg class="c-pin"><use href="#pin"/></svg><svg class="c-x"><use href="#cx"/></svg></span></div>
      <div class="preview">
        <svg viewBox="3 606 361 407" class="pvsvg">
          <path class="fr" d="M7.500 685.500H361.500V936.500H7.500ZM11.500 690.500H361.500M11.500 690.500V922.500M7.500 922.500H361.500"/>
          <path class="fr" d="M46.500 685.500v5M81.500 685.500v5M116.500 685.500v5M151.500 685.500v5M186.500 685.500v5M221.500 685.500v5M256.500 685.500v5M291.500 685.500v5M326.500 685.500v5M7.500 719.500h4M7.500 748.500h4M7.500 777.500h4M7.500 806.500h4M7.500 835.500h4M7.500 864.500h4M7.500 893.500h4"/>
          <path class="fr" d="M24.500 922.500v14M41.500 922.500v14M58.500 922.500v14M68.500 922.500v14M91.500 922.500v14M162.500 922.500v14M191.500 922.500v14M260.500 922.500v14M286.500 922.500v14M344.500 929.500v7M7.500 926.500h84M7.500 929.500h84M7.500 932.500h84M91.500 932.500h71M260.500 929.500h84M286.500 926.500h58"/>
          <path d="M92 923h60v1H92zM92 928h42v1H92zM192 924h25v1h-25z" fill="#b9a0c8"/>
          <path d="M163 923l5 5-5 8z" fill="#f0a030"/>
          <text class="pvlogo" x="168" y="934">muJin</text>
          <path class="pr" d="M93 770.500H245M262 770.500H306M93 777.500H245M262 777.500H306M93 784.500H245M262 784.500H306M172.500 747V770.500M179.500 747V777.500M186.500 747V784.500M94 811.500H108.500V872M115.500 817V872M122.500 817V872M128.500 817V872M135.500 817V872M108.500 842H135.500"/>
          <path class="prf" d="M170 746h5v3h-5zM177 746h5v3h-5zM184 746h5v3h-5zM93 769h3v3h-3zM93 776h2v3h-2zM93 783h2v3h-2zM114 816h3v3h-3zM121 816h3v3h-3zM134 816h3v3h-3zM107 871h3v3h-3zM114 871h3v3h-3zM121 871h3v3h-3zM127 871h3v3h-3zM134 871h3v3h-3z"/>
          <path class="pr t" d="M115 768v4M115 775v4M115 782v4M156 768v4M156 775v4M156 782v4M190 768v4M190 775v4M190 782v4M224 768v4M224 775v4M224 782v4M284 768v4M284 775v4M284 782v4M304 768v4M304 775v4M304 782v4M102 809v4M115 830v4M122 830v4M128 830v4M135 830v4M108 857v4M115 857v4M122 857v4M128 857v4M135 857v4"/>
          <path class="pb" d="M139 768v5M136.500 770.500h5M139 775v5M136.500 777.500h5M139 782v5M136.500 784.500h5M203 768v5M200.500 770.500h5M203 775v5M200.500 777.500h5M203 782v5M200.500 784.500h5M108.500 843v5M106 845.500h5M115.500 843v5M113 845.500h5M122.500 843v5M120 845.500h5M128.500 843v5M126 845.500h5M135.500 843v5M133 845.500h5"/>
          <path class="pb" d="M244.500 770.500v-2h5v2h3v16h-8v-3h6v-5h-6v-3h6v-5h-6"/>
          <path class="pb" d="M263.500 770.500v-2h-5v2h-4v16h9v-3h-7v-5h7v-3h-7v-5h7"/>
        </svg>
      </div>
    </section>
  </aside>

  <section class="doc">
    <div class="dtabs">
      <div class="dtab act"><span class="dt">&amp;Scheme+MC/1 (新项目)</span><svg class="dx"><use href="#cx"/></svg></div>
      <div class="dtab two"><span class="dt">&amp;Scheme+MC/4 (138_GCDEMO)</span></div>
      <div class="dtab three"><span class="dt">&amp;Scheme+MC/1 (064 EE0911)</span></div>
      <svg class="dmenu"><use href="#tri"/></svg>
    </div>
    <div class="sheetwrap">
      <svg class="sheet" viewBox="377 158 1510 856" xmlns="http://www.w3.org/2000/svg">
        <path class="wire" d="M451 340.500H863.500V222M872.500 340.500H1233M1338 340.500H1544M863.500 332l9 8.500M451 376.500H898.500V222M907.500 376.500H1233M1338 376.500H1544M898.500 367l9 9.500M451 411.500H933.500V222M942.500 411.500H1233M1338 411.500H1544M933.500 402l9 9.500"/>
        <path class="fill" d="M457 335v11l12-5.500zM457 371v11l12-5.500zM457 406v11l12-5.500zM858 222h11l-5.500-13zM893 222h11l-5.500-13zM928 222h11l-5.500-13zM1544 335v11l13-5.500zM1544 371v11l13-5.500zM1544 406v11l13-5.500zM457 546v11l12-5.500z"/>
        <path class="tick" d="M561 336l9 10M561 372l9 10M561 407l9 10M771 336l10 10M771 372l10 10M771 407l10 10M947 336l9 10M947 372l9 10M947 407l9 10M1122 336l10 10M1122 372l10 10M1122 407l10 10M1438 336l10 10M1438 372l10 10M1438 407l10 10M492 547l8 8"/>
        <path class="blue" d="M679 340.500H697.500M679 376.500H697.500M679 411.500H697.500M1012 340.500H1030M1012 376.500H1030M1012 411.500H1030"/>
        <g class="term">
          <circle cx="688" cy="340.500" r="3"/><circle cx="688" cy="376.500" r="3"/><circle cx="688" cy="411.500" r="3"/>
          <circle cx="1021.500" cy="340.500" r="3"/><circle cx="1021.500" cy="376.500" r="3"/><circle cx="1021.500" cy="411.500" r="3"/>
        </g>
        <path class="blue" d="M1233 340.500H1241a4 5 0 0 1 8 0a4 5 0 0 1 8 0a4 5 0 0 1 8 0H1279.500V419.500H1238.500V411.500H1241a4 5 0 0 1 8 0a4 5 0 0 1 8 0a4 5 0 0 1 8 0H1271.500V385.500H1238.500V376.500H1241a4 5 0 0 1 8 0a4 5 0 0 1 8 0a4 5 0 0 1 8 0H1271.500V349.500H1238.500V340.500"/>
        <path class="blue" d="M1338 340.500H1331a4 5 0 0 0 -9 0a4 5 0 0 0 -9 0a4 5 0 0 0 -9 0H1291.500V419.500H1331.500V411.500H1331a4 5 0 0 0 -9 0a4 5 0 0 0 -9 0a4 5 0 0 0 -9 0H1297.500V385.500H1331.500V376.500H1331a4 5 0 0 0 -9 0a4 5 0 0 0 -9 0a4 5 0 0 0 -9 0H1297.500V349.500H1331.500V340.500M1331.500 376.500H1338M1331.500 411.500H1338"/>
        <path class="wire" d="M451 551.500H530.500V722M530.500 736V863M565.500 590V718M565.500 736V863M600.500 590V718M600.500 736V863M635.500 590V718M635.500 736V863M670.500 590V718M670.500 736V863M530.500 717.500l9-8h17l9 8l9-8h17l9 8l9-8h18l9 8l9-8h17l9 8"/>
        <path class="fill" d="M560.500 590h10l-5-13zM595.500 590h10l-5-13zM630.500 590h10l-5-13zM665.500 590h10l-5-13zM525.500 863h10l-5 13zM560.500 863h10l-5 13zM595.500 863h10l-5 13zM630.500 863h10l-5 13zM665.500 863h10l-5 13z"/>
        <path class="tick" d="M561 652l9 10M596 652l9 10M631 652l9 10M666 652l9 10M526 792l9 10M561 792l9 10M596 792l9 10M631 792l9 10M666 792l9 10"/>
        <path class="blue" d="M530.500 718V736M565.500 718V736M600.500 718V736M635.500 718V736M670.500 718V736"/>
        <g class="term"><circle cx="530.500" cy="726" r="3"/><circle cx="565.500" cy="726" r="3"/><circle cx="600.500" cy="726" r="3"/><circle cx="635.500" cy="726" r="3"/><circle cx="670.500" cy="726" r="3"/></g>
        <path class="sheetline" d="M377 948.500H1887M1727.500 158V1014"/>
        <path class="sheetthick" d="M1846 158V1014"/>
        <path class="griddots" d="M389.450 165H1887M389.450 182.550H1887M389.450 200.100H1887M389.450 217.650H1887M389.450 235.200H1887M389.450 252.750H1887M389.450 270.300H1887M389.450 287.850H1887M389.450 305.400H1887M389.450 322.950H1887M389.450 340.500H1887M389.450 358.050H1887M389.450 375.600H1887M389.450 393.150H1887M389.450 410.700H1887M389.450 428.250H1887M389.450 445.800H1887M389.450 463.350H1887M389.450 480.900H1887M389.450 498.450H1887M389.450 516H1887M389.450 533.550H1887M389.450 551.100H1887M389.450 568.650H1887M389.450 586.200H1887M389.450 603.750H1887M389.450 621.300H1887M389.450 638.850H1887M389.450 656.400H1887M389.450 673.950H1887M389.450 691.500H1887M389.450 709.050H1887M389.450 726.600H1887M389.450 744.150H1887M389.450 761.700H1887M389.450 779.250H1887M389.450 796.800H1887M389.450 814.350H1887M389.450 831.900H1887M389.450 849.450H1887M389.450 867H1887M389.450 884.550H1887M389.450 902.100H1887M389.450 919.650H1887M389.450 937.200H1887M389.450 954.750H1887M389.450 972.300H1887M389.450 989.850H1887M389.450 1007.400H1887"/>
        <g class="lbl">
          <text x="447" y="348" text-anchor="end" textLength="23.400" lengthAdjust="spacingAndGlyphs">24V</text>
          <text x="447" y="384" text-anchor="end" textLength="15.600" lengthAdjust="spacingAndGlyphs">0V</text>
          <text x="447" y="418" text-anchor="end" textLength="15.600" lengthAdjust="spacingAndGlyphs">PE</text>
          <text x="648" y="356" textLength="23.400" lengthAdjust="spacingAndGlyphs">-X1</text>
          <text x="648" y="391" textLength="23.400" lengthAdjust="spacingAndGlyphs">-X2</text>
          <text x="648" y="426" textLength="23.400" lengthAdjust="spacingAndGlyphs">-X3</text>
          <text x="1272" y="322" textLength="23.400" lengthAdjust="spacingAndGlyphs">-T1</text>
          <text x="1561" y="349" textLength="40" lengthAdjust="spacingAndGlyphs">24V.2</text>
          <text x="1561" y="384" textLength="32" lengthAdjust="spacingAndGlyphs">0V.2</text>
          <text x="1561" y="419" textLength="32" lengthAdjust="spacingAndGlyphs">PE.2</text>
          <text x="417" y="558" textLength="31.200" lengthAdjust="spacingAndGlyphs">1P24</text>
          <text x="491" y="742" textLength="23.400" lengthAdjust="spacingAndGlyphs">-X4</text>
          <text x="870" y="203" transform="rotate(-90 870 203)" textLength="38" lengthAdjust="spacingAndGlyphs">24V.1</text>
          <text x="906" y="203" transform="rotate(-90 906 203)" textLength="31" lengthAdjust="spacingAndGlyphs">0V.1</text>
          <text x="941" y="203" transform="rotate(-90 941 203)" textLength="31" lengthAdjust="spacingAndGlyphs">PE.1</text>
          <text x="571.500" y="573" transform="rotate(-90 571.500 573)" textLength="7.800" lengthAdjust="spacingAndGlyphs">6</text>
          <text x="606.500" y="573" transform="rotate(-90 606.500 573)" textLength="7.800" lengthAdjust="spacingAndGlyphs">7</text>
          <text x="641.500" y="573" transform="rotate(-90 641.500 573)" textLength="7.800" lengthAdjust="spacingAndGlyphs">8</text>
          <text x="676.500" y="573" transform="rotate(-90 676.500 573)" textLength="7.800" lengthAdjust="spacingAndGlyphs">9</text>
          <text x="536.500" y="888" transform="rotate(-90 536.500 888)" textLength="7.800" lengthAdjust="spacingAndGlyphs">1</text>
          <text x="571.500" y="888" transform="rotate(-90 571.500 888)" textLength="7.800" lengthAdjust="spacingAndGlyphs">2</text>
          <text x="606.500" y="888" transform="rotate(-90 606.500 888)" textLength="7.800" lengthAdjust="spacingAndGlyphs">3</text>
          <text x="641.500" y="888" transform="rotate(-90 641.500 888)" textLength="7.800" lengthAdjust="spacingAndGlyphs">4</text>
          <text x="676.500" y="888" transform="rotate(-90 676.500 888)" textLength="7.800" lengthAdjust="spacingAndGlyphs">5</text>
        </g>
        <g class="pn">
          <text x="693" y="352">1</text><text x="693" y="387">1</text><text x="693" y="422">1</text>
          <text x="1026" y="352">2</text><text x="1026" y="387">2</text><text x="1026" y="422">2</text>
          <text x="1231" y="336">5</text><text x="1231" y="371">2</text><text x="1231" y="406">1</text>
          <text x="1330" y="336">6</text><text x="1330" y="371">4</text><text x="1330" y="406">3</text>
          <text x="535" y="738">1</text><text x="570" y="738">2</text><text x="605" y="738">3</text><text x="640" y="738">4</text><text x="675" y="738">5</text>
        </g>
        <g class="wn">
          <text x="571" y="328">001</text><text x="571" y="364">002</text><text x="571" y="399">003</text>
          <text x="782" y="328">014</text><text x="782" y="364">015</text><text x="782" y="399">016</text>
          <text x="957" y="328">017</text><text x="957" y="364">018</text><text x="957" y="399">019</text>
          <text x="1132" y="328">020</text><text x="1132" y="364">021</text><text x="1132" y="399">022</text>
          <text x="1448" y="328">023</text><text x="1448" y="364">024</text><text x="1448" y="399">025</text>
          <text x="501" y="539">004</text>
          <text x="582" y="655">006</text><text x="617" y="655">008</text><text x="652" y="655">010</text><text x="687" y="655">012</text>
          <text x="547" y="796">005</text><text x="582" y="796">007</text><text x="617" y="796">009</text><text x="652" y="796">011</text><text x="687" y="796">013</text>
        </g>
      </svg>
    </div>
  </section>

  <aside class="rtools">
    <div class="rgrp">
      <i class="grip"></i>
      <i class="rb"><svg><use href="#k1"/></svg></i><i class="rb"><svg><use href="#k2"/></svg></i><i class="rb"><svg><use href="#k3"/></svg></i><i class="rb"><svg><use href="#k4"/></svg></i><b class="rs"></b>
      <i class="rb"><svg><use href="#y1"/></svg></i><i class="rb"><svg><use href="#y2"/></svg></i><i class="rb"><svg><use href="#y3"/></svg></i><i class="rb"><svg><use href="#y4"/></svg></i><b class="rs"></b>
      <i class="rb"><svg><use href="#v1"/></svg></i><i class="rb"><svg><use href="#v2"/></svg></i><b class="rs"></b>
      <i class="rb"><svg><use href="#a1"/></svg></i><i class="rb"><svg><use href="#a2"/></svg></i>
    </div>
    <div class="rgrp last">
      <i class="grip"></i>
      <i class="rb"><svg><use href="#ln"/></svg></i><i class="rb"><svg><use href="#pll"/></svg></i><i class="rb"><svg><use href="#plg"/></svg></i><i class="rb"><svg><use href="#re3"/></svg></i><i class="rb"><svg><use href="#rc2"/></svg></i><b class="rs"></b>
      <i class="rb"><svg><use href="#ci"/></svg></i><i class="rb"><svg><use href="#ci2"/></svg></i><i class="rb"><svg><use href="#ci3"/></svg></i><i class="rb"><svg><use href="#ci4"/></svg></i><i class="rb"><svg><use href="#ci5"/></svg></i><i class="rb"><svg><use href="#el"/></svg></i><b class="rs"></b>
      <i class="rb"><svg><use href="#sp"/></svg></i><b class="rs"></b>
      <i class="rb"><svg><use href="#txt"/></svg></i><i class="rb"><svg><use href="#im"/></svg></i><i class="rb"><svg><use href="#lk"/></svg></i><b class="rs"></b>
      <i class="rb"><svg><use href="#m1"/></svg></i><i class="rb"><svg><use href="#m2"/></svg></i><i class="rb"><svg><use href="#m3"/></svg></i><i class="rb"><svg><use href="#m3"/></svg></i><i class="rb"><svg><use href="#m4"/></svg></i><i class="rb"><svg><use href="#m5"/></svg></i><i class="rb"><svg><use href="#m6"/></svg></i>
    </div>
  </aside>
</main>

<footer class="status">
  <div class="st st1"><span>RX: 98.24</span><span>RY: 119.01</span></div>
  <div class="st st2"></div>
  <div class="st st3">打开: 4.00 mm</div>
  <div class="st st4">逻辑 1:1</div>
  <div class="st st5"></div>
  <div class="st st6"></div>
</footer>
</body>
</html>
```
FILE: styles.css
```css
* { box-sizing: border-box; }
html { margin: 0; padding: 0; width: 1920px; height: 1040px; overflow: hidden; }
body {
  margin: 0; padding: 0;
  width: 1920px; height: 1040px; overflow: hidden;
  display: flex; flex-direction: column;
  background: #fff; color: #1a1a1a;
  font: 12px "Noto Sans", "Noto Sans CJK SC", sans-serif;
}
i, b { font-style: normal; display: block; }
.sprite { display: none; }
.lift { position: relative; top: -1px; }

/* title and menu */
.titlebar { height: 23px; display: flex; align-items: center; padding-left: 2px; flex: none; }
.appicon { width: 16px; height: 16px; margin-right: 5px; }
.apptitle { font-size: 12.500px; color: #111; white-space: nowrap; padding-bottom: 2px; }
.winbtns { margin-left: auto; display: flex; padding-right: 2px; }
.wb { width: 46px; height: 20px; display: flex; align-items: center; justify-content: center; }
.wb svg { width: 11px; height: 11px; }
.menubar {
  height: 24px; flex: none; display: flex; gap: 15.700px; align-items: center;
  padding: 0 0 2px 17px; font-size: 12.500px;
  border-top: 1px solid #f0f0f0; border-bottom: 1px solid #b0b0b0; border-right: 1px solid #b0b0b0;
  white-space: nowrap; color: #222;
}

/* toolbars */
.toolbars { flex: none; height: 84px; display: flex; flex-direction: column; }
.row { height: 28px; display: flex; flex: none; }
.grp { display: flex; align-items: center; height: 28px; border-bottom: 1px solid #b0b0b0; border-right: 1px solid #b0b0b0; padding-top: 1px; }
.r1a { padding-left: 7px; width: 468px; }
.r2a { padding-left: 9px; width: 372px; }
.r3a { padding-left: 12px; width: 236px; }
.gripped { padding-left: 11px; position: relative; }
.gripped::before { content: ""; position: absolute; left: 4px; top: 5px; bottom: 5px; border-left: 2px dotted #c4c4c4; }
.grp.end { padding-right: 40px; }
.b { width: 24px; height: 24px; display: flex; align-items: center; justify-content: center; flex: none; border: 1px solid transparent; }
.b svg { width: 18px; height: 18px; display: block; }
.b.on { background: #c4e3fb; border-color: #99d1ff; }
.b.wide { margin-right: 3px; }
.s { width: 1px; height: 22px; background: #a0a0a0; margin: 0 3px 0 4px; flex: none; }
.gl { font: bold 8px "Liberation Sans", sans-serif; fill: #c9592b; }
.tn { font: bold 5.500px "Liberation Sans", sans-serif; fill: #c79013; }
svg .tt { font-family: "Liberation Serif", serif; font-size: 15px; font-weight: bold; fill: #333; text-anchor: middle; }
.gn { font: bold 7px "Liberation Sans", sans-serif; fill: #999; text-anchor: middle; }
.bigt { font: 21px "Liberation Serif", serif; fill: #111; text-anchor: middle; }
.ampt { font: bold 10px "Liberation Sans", sans-serif; fill: #555; text-anchor: middle; }
.nd { fill: #f2c230; stroke: #b98600; stroke-width: .7; }

/* main */
.main { flex: none; height: 889px; display: flex; }
.left { width: 373px; flex: none; background: #f5f5f5; display: flex; flex-direction: column; gap: 3px; }
.panel { width: 369px; display: flex; flex-direction: column; border-right: 1px solid #b4b4b4; }
.panel.top { height: 444px; border-bottom: 1px solid #b4b4b4; }
.panel.bottom { height: 440px; border-bottom: 1px solid #b4b4b4; }
.ptitle {
  height: 23px; flex: none; display: flex; align-items: center; justify-content: space-between;
  padding: 0 3px 0 4px; font-size: 13px; color: #222;
  background: linear-gradient(#b7cbe0, #d9e6f4);
}
.pctl { display: flex; align-items: center; }
.c-tri { width: 9px; height: 6px; margin-right: 11px; }
.c-pin { width: 9px; height: 11px; margin-right: 10px; }
.c-x { width: 13px; height: 13px; }
.ptabs { height: 28px; flex: none; display: flex; align-items: flex-end; padding-left: 3px; }
.ptab { height: 24px; padding: 0 14px 3px 5px; display: flex; align-items: center; font-size: 13.200px; color: #999; border-right: 1px solid #ccc; }
.ptab.act { width: 79px; color: #222; background: #f0f0f0; border-right: 1px solid #111; padding: 0 0 3px 5px; margin-right: 2px; }
.pbody {
  height: 363px; margin: 0 2px 0 3px; flex: none; background: #f0f0f0;
  border: 1px solid #c4c4c4; padding: 7px 2px 0 2px; display: flex; flex-direction: column;
}
.flabel { display: block; height: 16px; line-height: 15px; color: #222; font-size: 12px; margin-bottom: 5px; }
.flabel.second { margin: 9px 0 6px; }
.filter { display: flex; gap: 10px; height: 25px; flex: none; }
.combo { width: 322px; background: #e1e1e1; border: 1px solid #adadad; display: flex; align-items: center; justify-content: space-between; padding: 0 8px 0 4px; }
.cv { width: 10px; height: 6px; }
.dots { width: 24px; background: #f0f0f0; border: 1px solid #adadad; text-align: center; line-height: 22px; }
.field { height: 22px; flex: none; width: 355px; border: 1px solid #a8a8a8; border-top: 2px solid #8a8a8a; border-left: 2px solid #a8a8a8; background: #f0f0f0; box-shadow: 1px 1px 0 #fff; }
.tree { margin-top: 12px; height: 242px; width: 357px; flex: none; background: #fff; border: 1px solid #a0a0a0; display: flex; }
.tlist { flex: none; width: 339px; position: relative; overflow: hidden; }
.tlines { position: absolute; left: 0; top: 0; width: 339px; height: 240px; }
.tr { height: 20px; display: flex; align-items: center; position: relative; }
.tr.l1 { padding-left: 25px; }
.tr.l2 { padding-left: 45px; }
.tr.l3 { padding-left: 65px; }
.ex, .nox { width: 9px; height: 9px; flex: none; margin-right: 7px; }
.ex { border: 1px solid #999; background: linear-gradient(#fff, #e4e4e4); position: relative; }
.ex::before { content: ""; position: absolute; left: 1px; right: 1px; top: 3px; height: 1px; background: #2f4f7f; }
.ex.pl::after { content: ""; position: absolute; top: 1px; bottom: 1px; left: 3px; width: 1px; background: #2f4f7f; }
.ti { width: 16px; height: 14px; flex: none; }
.tr .tt { font-family: "Noto Sans", sans-serif; font-size: 12.400px; padding: 0 4px 2px; margin-left: 3px; height: 20px; line-height: 18px; color: #222; white-space: nowrap; }
.tr .sel { flex: 1; background: #e0e0e0; font-weight: bold; color: #111; font-size: 12px; }
.vbar { flex: none; width: 16px; margin-left: 0; background: #f0f0f0; display: flex; flex-direction: column; align-items: center; padding: 8px 0 5px; }
.va { width: 9px; height: 6px; flex: none; }
.thumbwrap { flex: 1; width: 100%; padding-top: 14px; }
.thumb { height: 20px; background: #cdcdcd; width: 100%; }
.btabs { height: 26px; flex: none; margin: 0 2px 0 3px; border-top: 1px solid #111; display: flex; padding-left: 3px; background: #f0f0f0; }
.btab { height: 24px; padding: 0 9px 3px 6px; display: flex; align-items: center; font-size: 12.500px; color: #999; border-right: 1px solid #ccc; margin: 0; }
.btab.act { width: 25px; color: #222; border-right: 1px solid #111; border-bottom: 1px solid #111; }
.preview { margin: 4px 3px 0 2px; height: 409px; border: 1px solid #000; background: #fff; box-shadow: -1px -1px 0 #999, 2px 2px 0 #aaa; }
.pvsvg { width: 361px; height: 407px; display: block; }
.fr { fill: none; stroke: #000; shape-rendering: crispEdges; }
.pr { fill: none; stroke: #f00; shape-rendering: crispEdges; }
.prf { fill: #f00; shape-rendering: crispEdges; }
.pb { fill: none; stroke: #00f; shape-rendering: crispEdges; }
.pvlogo { font: 7px "Liberation Sans", sans-serif; fill: #aaa; }

/* document area */
.doc { width: 1519px; flex: none; display: flex; flex-direction: column; background: #bcd2e8; }
.dtabs { height: 24px; flex: none; background: #f5f5f5; border-top: 1px solid #aaa; border-right: 1px solid #aaa; display: flex; align-items: flex-end; padding-left: 9px; position: relative; }
.dtab { height: 22px; display: flex; align-items: center; background: #bcd2ea; border: 1px solid #a8a8a8; border-bottom: none; border-radius: 9px 3px 0 0; flex: none; }
.dtab.act { width: 198px; background: linear-gradient(#e9f0f9, #c4d8ee); padding-left: 22px; font-weight: bold; }
.dtab.two { width: 199px; padding-left: 15px; }
.dtab.three { width: 185px; padding-left: 15px; }
.dt { white-space: nowrap; font-size: 11.600px; padding-bottom: 2px; }
.act .dt { font-size: 12.200px; }
.dx { width: 14px; height: 13px; margin-left: 8px; flex: none; }
.dmenu { position: absolute; right: 7px; top: 11px; width: 10px; height: 6px; }
.sheetwrap { flex: 1; padding: 2px 4px 4px 4px; }
.sheet { width: 1510px; height: 856px; display: block; background: #fff; box-shadow: 0 -1px 0 #666, 0 -2px 0 #666; shape-rendering: crispEdges; }
.wire { fill: none; stroke: #f00; stroke-width: 1; }
.tick { fill: none; stroke: #e01010; stroke-width: 1; }
.fill { fill: #f00; }
.blue { fill: none; stroke: #00f; stroke-width: 1; }
.term circle { fill: #fff; stroke: #00f; shape-rendering: geometricPrecision; }
.sheetline { fill: none; stroke: #808080; }
.sheetthick { fill: none; stroke: #000; stroke-width: 2; }
.griddots { fill: none; stroke: #000; stroke-width: 1; stroke-dasharray: 1 16.550; }
.lbl text { font: 18px "Liberation Mono", monospace; fill: #00f; }
.pn text { font: 12px "Liberation Mono", monospace; fill: #000; }
.wn text { font: 7.500px "Liberation Sans", sans-serif; fill: #ff3a3a; text-anchor: middle; }

/* right tools */
.rtools { width: 28px; flex: none; background: #fff; display: flex; flex-direction: column; }
.rgrp { border-top: 1px solid #aaa; border-left: 1px solid #ddd; display: flex; flex-direction: column; align-items: center; padding-top: 4px; }
.rgrp.last { overflow: hidden; flex: 1; height: 0; padding-bottom: 0; padding-top: 5px; border-bottom: 1px solid #aaa; }
.grip { width: 22px; border-top: 2px dotted #c4c4c4; height: 2px; margin-bottom: 4px; flex: none; }
.rb { width: 26px; height: 23.800px; display: flex; align-items: center; justify-content: center; flex: none; }
.rgrp.last .rb { height: 24px; }
.rb svg { width: 18px; height: 18px; display: block; }
.rs { width: 20px; height: 1px; background: #999; margin: 4px 0 3px; flex: none; }

/* status */
.status { height: 20px; flex: none; display: flex; background: #f0f0f0; border-top: 1px solid #ddd; align-items: stretch; color: #444; font-size: 11.500px; }
.st { display: flex; align-items: center; flex: none; border-right: 1px solid #d4d4d4; padding: 0 0 2px 5px; white-space: nowrap; }
.st1 { width: 946px; gap: 11px; padding-left: 6px; color: #222; }
.st2 { width: 487px; }
.st3 { width: 219px; color: #666; }
.st4 { width: 126px; color: #666; }
.st5 { width: 82px; }
.st6 { flex: 1; border-right: none; }
```
